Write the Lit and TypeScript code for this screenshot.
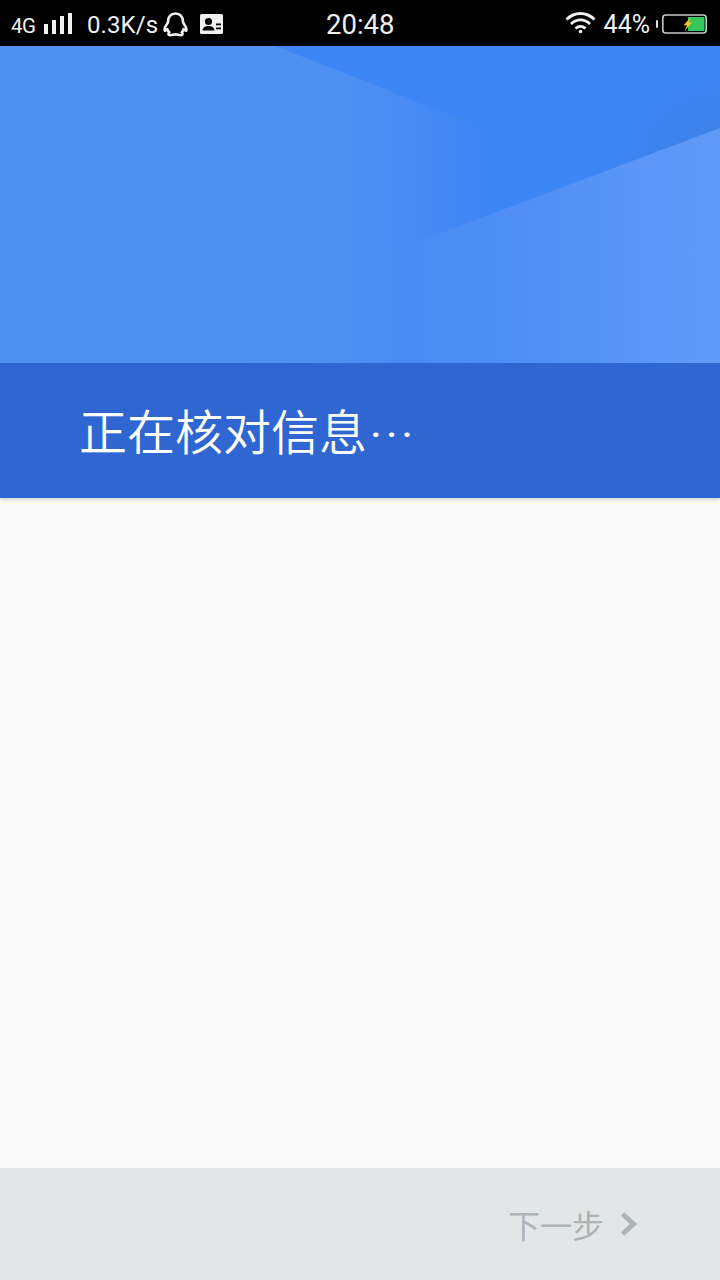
import { LitElement, html, css, svg } from "lit";
import { customElement } from "lit/decorators.js";

const CJK = css`"Noto Sans CJK SC", "Roboto", sans-serif`;

@customElement("app-root")
export class AppRoot extends LitElement {
  static styles = css`
    :host { display: block; width: 720px; height: 1280px; font-family: Roboto, "Noto Sans CJK SC", sans-serif; }
    .page { display: flex; flex-direction: column; height: 1280px; background: #fafafa; }
    .status { height: 46px; flex: none; background: #000; color: #f0f0f0; display: flex; align-items: center; justify-content: space-between; padding: 0 13px 0 11px; position: relative; box-sizing: border-box; }
    .side { display: flex; align-items: center; }
    .net { font-size: 20.5px; letter-spacing: -0.6px; margin-top: 5px; width: 33px; }
    .speed { font-size: 24px; margin-left: 15px; margin-top: 3px; letter-spacing: 0.1px; }
    .clock { font-size: 27.5px; position: absolute; left: 326px; top: 9px; line-height: 31px; }
    .pct { font-size: 25px; margin: 2px 6px 0 8px; }
    .sig { margin-top: 1px; }
    .qq { margin-left: 5px; margin-top: 3px; }
    .card { margin-left: 12px; margin-top: 1px; }
    .wifi { margin-top: -2px; }
    .batt { margin-top: 1px; }
    svg { display: block; flex: none; }
    .hero { height: 317px; flex: none; }
    .band { height: 135px; flex: none; background: #2f66d2; box-shadow: 0 2px 3px rgba(0,0,0,0.14); display: flex; align-items: center; padding: 0 0 3px 79px; box-sizing: border-box; color: #fff; font-family: ${CJK}; font-size: 48px; font-weight: 350; }
    .dots { font-family: Roboto, sans-serif; font-size: 32px; letter-spacing: 6px; margin-left: 4px; margin-top: 10px; font-weight: 700; }
    .main { flex: 1; }
    .foot { height: 112px; flex: none; background: #e2e6e7; display: flex; align-items: center; justify-content: flex-end; padding-right: 83px; color: #aeb3b5; font-family: ${CJK}; font-size: 32px; gap: 16px; }
  `;

  render() {
    return html`
      <div class="page">
        <div class="status">
          <div class="side">
            <span class="net">4G</span>
            <svg class="sig" width="28" height="21" viewBox="0 0 28 21" fill="#f0f0f0"><rect x="0" y="11" width="4" height="10"/><rect x="8" y="7" width="4" height="14"/><rect x="16" y="3" width="4" height="18"/><rect x="24" y="0" width="4" height="21"/></svg>
            <span class="speed">0.3K/s</span>
            <svg class="qq" width="25" height="25" viewBox="0 0 25 25" fill="none" stroke="#f0f0f0" stroke-width="2.600" stroke-linejoin="round"><path d="M12.500 1.500c-5 0-7.400 3.600-7.400 7.800 0 1.300-.5 2-1.400 3.200-1.500 2.100-2.600 4.500-2 6.100.7.500 1.500-.2 2.600-1.400.5 1.500 1.100 2.500 2 3.200-1.100.600-1.400 2.800.8 2.800 2 0 3.600-.800 5.400-.800s3.400.800 5.400.800c2.200 0 1.900-2.200.8-2.800.9-.7 1.500-1.700 2-3.200 1.100 1.200 1.900 1.900 2.600 1.400.6-1.600-.5-4-2-6.100-.9-1.200-1.400-1.900-1.400-3.200 0-4.200-2.400-7.800-7.400-7.800z"/></svg>
            <svg class="card" width="23" height="20" viewBox="0 0 23 20"><rect width="23" height="20" rx="1.500" fill="#f0f0f0"/><circle cx="8.500" cy="7.500" r="3.600" fill="#000"/><path d="M2.500 16.500c.3-3.200 2.800-4.600 6-4.600s5.700 1.400 6 4.600z" fill="#000"/><rect x="16" y="9.500" width="5" height="1.800" fill="#000"/><rect x="16" y="13.500" width="5" height="1.800" fill="#000"/></svg>
          </div>
          <span class="clock">20:48</span>
          <div class="side">
            <svg class="wifi" width="31" height="23" viewBox="0 0 31 23" fill="none" stroke="#f0f0f0" stroke-width="2.800"><path d="M1.500 8.500C9.500 .5 21.500 .5 29.500 8.500"/><path d="M6 13c5.500-5.500 13.500-5.500 19 0"/><path d="M10.500 17.500c3-2.800 7-2.800 10 0"/><circle cx="15.500" cy="20.500" r="1.800" fill="#f0f0f0" stroke="none"/></svg>
            <span class="pct">44%</span>
            <svg class="batt" width="51" height="20" viewBox="0 0 51 20"><rect x="0" y="6" width="2" height="8" rx="1" fill="#ddd"/><rect x="6.800" y="1" width="43.400" height="18" rx="3" fill="none" stroke="#c8c8c8" stroke-width="1.600"/><rect x="32" y="3" width="16.500" height="14" fill="#34c759"/><path d="M35 3l-7.500 8.200h3.500l-2.500 5.800 7.500-8.500h-3.500z" fill="#f3c32c"/></svg>
          </div>
        </div>
        <svg class="hero" width="720" height="317" viewBox="0 0 720 317" preserveAspectRatio="none">
          <defs>
            <linearGradient id="h-left" gradientUnits="userSpaceOnUse" x1="240" x2="520" y1="0" y2="0">
              <stop offset="0" stop-color="#5090f2"/>
              <stop offset="0.4" stop-color="#4e8ff3"/>
              <stop offset="0.75" stop-color="#4689f2" stop-opacity="0.7"/>
              <stop offset="1" stop-color="#3d86f5" stop-opacity="0"/>
            </linearGradient>
            <radialGradient id="h-top" gradientUnits="userSpaceOnUse" cx="720" cy="130" r="130">
              <stop offset="0" stop-color="#3f7fe3"/>
              <stop offset="0.5" stop-color="#3d83ed"/>
              <stop offset="1" stop-color="#3c86f5"/>
            </radialGradient>
            <linearGradient id="h-right" gradientUnits="userSpaceOnUse" x1="385" x2="720" y1="0" y2="0">
              <stop offset="0" stop-color="#4a8bf2" stop-opacity="0"/>
              <stop offset="0.08" stop-color="#4a8bf3"/>
              <stop offset="0.5" stop-color="#5290f5"/>
              <stop offset="0.78" stop-color="#5b97f7"/>
              <stop offset="1" stop-color="#5f99f6"/>
            </linearGradient>
          </defs>
          <rect width="720" height="317" fill="url(#h-top)"/>
          ${svg`<rect y="200" width="720" height="117" fill="#4487f1"/>`}
          ${svg`<polygon points="0,0 275,0 640,143 640,317 0,317" fill="url(#h-left)"/>`}
          ${svg`<polygon points="720,82 720,317 385,317 385,208" fill="url(#h-right)"/>`}
        </svg>
        <div class="band"><span>正在核对信息</span><span class="dots">···</span></div>
        <div class="main"></div>
        <div class="foot">
          <span>下一步</span>
          <svg width="17" height="24" viewBox="0 0 17 24" fill="none" stroke="#aeb3b5" stroke-width="5"><path d="M2.500 2l11 10-11 10"/></svg>
        </div>
      </div>
    `;
  }
}
